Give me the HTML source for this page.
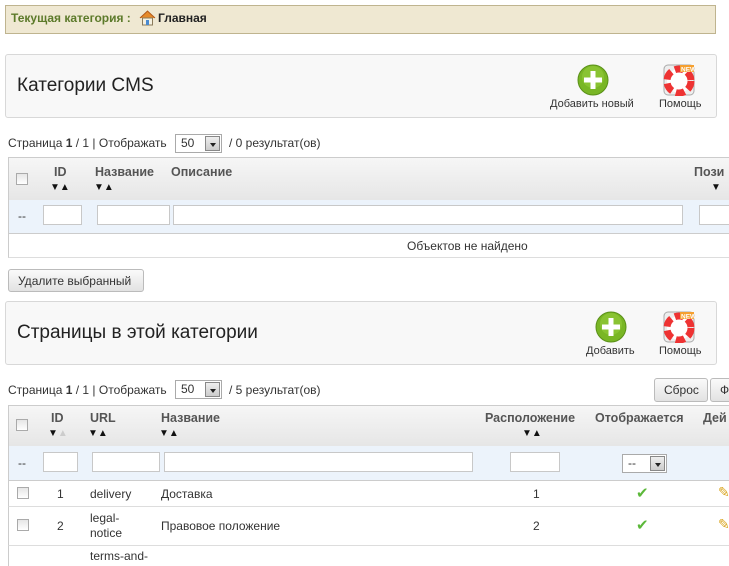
<!DOCTYPE html>
<html><head><meta charset="utf-8"><style>
*{margin:0;padding:0;box-sizing:border-box}
body{width:729px;height:559px;overflow:hidden;background:#fff;font-family:"Liberation Sans",Arial,sans-serif;font-size:12px;color:#333;position:relative}
.a{position:absolute;white-space:nowrap}
.panel{position:absolute;left:5px;width:712px;height:64px;background:#f8f8f8;border:1px solid #d8d8d8;border-radius:3px}
.ttl{font-size:19px;color:#222}
.inp{position:absolute;height:20px;background:#fff;border:1px solid #c8c8c8}
.hdr{position:absolute;left:8px;right:-5px;background:linear-gradient(#f6f6f6,#e6e6e6);border:1px solid #ccc;border-bottom:none}
.flt{position:absolute;left:8px;right:-5px;background:#ecf3fb;border-left:1px solid #ccc}
.th{position:absolute;font-weight:bold;color:#555;font-size:12.5px}
.cb{position:absolute;width:12px;height:12px;border:1px solid #aaa;background:linear-gradient(#e6e6e6,#fff)}
.ar{position:absolute;font-size:10px;color:#111;letter-spacing:0}
.sel{position:absolute;height:19px;background:#fff;border:1px solid #aaa;font-size:12px;padding:1px 5px}
.sel i{position:absolute;right:1px;top:1px;width:15px;height:15px;border:1px solid #888;background:linear-gradient(#eee,#ccc)}
.sel i:after{content:"";position:absolute;left:4px;top:6px;border:3px solid transparent;border-top:4px solid #222}
.btn{position:absolute;height:23px;border:1px solid #bbb;border-radius:3px;background:linear-gradient(#fafafa,#e2e2e2);font-size:12px;padding:4px 9px;color:#333}
.row{position:absolute;left:8px;right:-5px;border-left:1px solid #ccc;border-bottom:1px solid #ddd}
</style></head><body>

<div class="a" style="left:5px;top:5px;width:711px;height:29px;background:#efe8d2;border:1px solid #bfb48f"></div>
<div class="a" style="left:11px;top:11px;color:#5c7a2a;font-weight:bold">Текущая категория :</div>
<svg class="a" style="left:139px;top:10px" width="17" height="16" viewBox="0 0 17 16"><path d="M1 8 L8.5 1 L16 8" fill="#e58a2a" stroke="#b0581a"/><rect x="3.5" y="8" width="10" height="7" fill="#f4f0e0" stroke="#8a7a5a"/><rect x="7" y="10" width="3" height="5" fill="#4a8ad0"/></svg>
<div class="a" style="left:158px;top:11px;color:#222;font-weight:bold">Главная</div>

<div class="panel" style="top:54px"></div>
<div class="a ttl" style="left:17px;top:75px">Категории CMS</div>
<svg class="a" style="left:577px;top:64px" width="32" height="32"><circle cx="16" cy="16" r="15" fill="#79b625" stroke="#5a9018"/><circle cx="16" cy="13" r="11" fill="#9ad040" opacity=".5"/><rect x="13.5" y="7" width="5" height="18" fill="#fff"/><rect x="7" y="13.5" width="18" height="5" fill="#fff"/></svg>
<div class="a" style="left:550px;top:98px;font-size:11px">Добавить новый</div>
<svg class="a" style="left:663px;top:64px" width="32" height="32"><rect x="1" y="1" width="30" height="30" rx="4" fill="#eee" stroke="#aaa"/><circle cx="16" cy="17" r="12" fill="#fff" stroke="#e33" stroke-width="7" stroke-dasharray="9 4"/><circle cx="16" cy="17" r="5" fill="#fff"/><rect x="17" y="1" width="14" height="7" fill="#f5a030"/><text x="18" y="7.5" font-size="6.5" fill="#fff" font-family="Liberation Sans" font-weight="bold">NEW</text></svg>
<div class="a" style="left:659px;top:98px;font-size:11px">Помощь</div>

<div class="a" style="left:8px;top:136px">Страница <b>1</b> / 1 | Отображать</div>
<div class="sel" style="left:175px;top:134px;width:47px">50<i></i></div>
<div class="a" style="left:229px;top:136px">/ 0 результат(ов)</div>

<div class="hdr" style="top:157px;height:43px"></div>
<div class="cb" style="left:16px;top:173px"></div>
<div class="th" style="left:54px;top:165px">ID</div><div class="ar" style="left:50px;top:182px">▼▲</div>
<div class="th" style="left:95px;top:165px">Название</div><div class="ar" style="left:94px;top:182px">▼▲</div>
<div class="th" style="left:171px;top:165px">Описание</div>
<div class="th" style="left:694px;top:165px">Пози</div><div class="ar" style="left:711px;top:182px">▼</div>
<div class="flt" style="top:200px;height:33px"></div>
<div class="a" style="left:18px;top:209px">--</div>
<div class="inp" style="left:43px;top:205px;width:39px"></div>
<div class="inp" style="left:97px;top:205px;width:73px"></div>
<div class="inp" style="left:173px;top:205px;width:510px"></div>
<div class="inp" style="left:699px;top:205px;width:40px"></div>
<div class="row" style="top:233px;height:25px;border-top:1px solid #ccc"></div>
<div class="a" style="left:407px;top:239px">Объектов не найдено</div>

<div class="btn" style="left:8px;top:269px;width:136px">Удалите выбранный</div>

<div class="panel" style="top:301px"></div>
<div class="a ttl" style="left:17px;top:322px">Страницы в этой категории</div>
<svg class="a" style="left:595px;top:311px" width="32" height="32"><circle cx="16" cy="16" r="15" fill="#79b625" stroke="#5a9018"/><circle cx="16" cy="13" r="11" fill="#9ad040" opacity=".5"/><rect x="13.5" y="7" width="5" height="18" fill="#fff"/><rect x="7" y="13.5" width="18" height="5" fill="#fff"/></svg>
<div class="a" style="left:586px;top:345px;font-size:11px">Добавить</div>
<svg class="a" style="left:663px;top:311px" width="32" height="32"><rect x="1" y="1" width="30" height="30" rx="4" fill="#eee" stroke="#aaa"/><circle cx="16" cy="17" r="12" fill="#fff" stroke="#e33" stroke-width="7" stroke-dasharray="9 4"/><circle cx="16" cy="17" r="5" fill="#fff"/><rect x="17" y="1" width="14" height="7" fill="#f5a030"/><text x="18" y="7.5" font-size="6.5" fill="#fff" font-family="Liberation Sans" font-weight="bold">NEW</text></svg>
<div class="a" style="left:659px;top:345px;font-size:11px">Помощь</div>

<div class="a" style="left:8px;top:383px">Страница <b>1</b> / 1 | Отображать</div>
<div class="sel" style="left:175px;top:380px;width:47px">50<i></i></div>
<div class="a" style="left:229px;top:383px">/ 5 результат(ов)</div>
<div class="btn" style="left:654px;top:378px;width:54px;height:24px">Сброс</div>
<div class="btn" style="left:710px;top:378px;width:40px;height:24px">Ф</div>

<div class="hdr" style="top:405px;height:41px"></div>
<div class="cb" style="left:16px;top:419px"></div>
<div class="th" style="left:51px;top:411px">ID</div><div class="ar" style="left:48px;top:428px">▼<span style="color:#ccc">▲</span></div>
<div class="th" style="left:90px;top:411px">URL</div><div class="ar" style="left:88px;top:428px">▼▲</div>
<div class="th" style="left:161px;top:411px">Название</div><div class="ar" style="left:159px;top:428px">▼▲</div>
<div class="th" style="left:485px;top:411px">Расположение</div><div class="ar" style="left:522px;top:428px">▼▲</div>
<div class="th" style="left:595px;top:411px">Отображается</div>
<div class="th" style="left:703px;top:411px">Дей</div>
<div class="flt" style="top:446px;height:34px"></div>
<div class="a" style="left:18px;top:456px">--</div>
<div class="inp" style="left:43px;top:452px;width:35px"></div>
<div class="inp" style="left:92px;top:452px;width:68px"></div>
<div class="inp" style="left:164px;top:452px;width:309px"></div>
<div class="inp" style="left:510px;top:452px;width:50px"></div>
<div class="sel" style="left:622px;top:454px;width:45px">--<i></i></div>

<div class="row" style="top:480px;height:27px;border-top:1px solid #ccc"></div>
<div class="cb" style="left:17px;top:487px"></div>
<div class="a" style="left:57px;top:487px">1</div>
<div class="a" style="left:90px;top:487px">delivery</div>
<div class="a" style="left:161px;top:487px">Доставка</div>
<div class="a" style="left:533px;top:487px">1</div>
<div class="a" style="left:636px;top:484px;color:#5cb83a;font-size:15px">✔</div>
<div class="a" style="left:718px;top:484px;color:#d9a520;font-size:14px">✎</div>

<div class="row" style="top:507px;height:39px"></div>
<div class="cb" style="left:17px;top:519px"></div>
<div class="a" style="left:57px;top:519px">2</div>
<div class="a" style="left:90px;top:511px;line-height:15px">legal-<br>notice</div>
<div class="a" style="left:161px;top:519px">Правовое положение</div>
<div class="a" style="left:533px;top:519px">2</div>
<div class="a" style="left:636px;top:516px;color:#5cb83a;font-size:15px">✔</div>
<div class="a" style="left:718px;top:516px;color:#d9a520;font-size:14px">✎</div>

<div class="row" style="top:546px;height:20px;border-bottom:none"></div>
<div class="a" style="left:90px;top:549px">terms-and-</div>
</body></html>
